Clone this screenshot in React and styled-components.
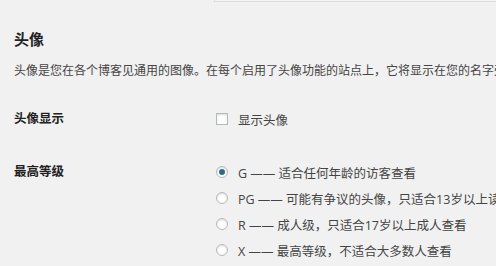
import React from "react";
import styled, { createGlobalStyle } from "styled-components";

const Global = createGlobalStyle`
  html, body { margin: 0; padding: 0; background: #f1f1f1; }
  body {
    font-family: "Open Sans", "Noto Sans CJK SC", sans-serif;
    color: #444;
    overflow: hidden;
  }
`;

const Page = styled.div`
  width: 496px;
  height: 266px;
  overflow: hidden;
  padding-left: 14px;
  box-sizing: border-box;
`;

const FieldTail = styled.div`
  margin-left: 200px;
  height: 1px;
  border: 1px solid #dcdcdc;
  border-top: none;
  border-right: none;
  background: #f4f4f4;
  margin-right: -20px;
`;

const Title = styled.h2`
  margin: 27px 0 0;
  font-size: 15px;
  line-height: 20px;
  font-weight: 700;
  color: #222;
`;

const Desc = styled.p`
  margin: 14px 0 0;
  font-size: 12px;
  line-height: 16px;
  white-space: nowrap;
  color: #444;
`;

const Row = styled.div`
  display: grid;
  grid-template-columns: 202px 1fr;
  margin-top: ${(p) => p.$top}px;
`;

const Label = styled.div`
  font-size: 12.5px;
  font-weight: 700;
  color: #222;
  line-height: 20px;
`;

const Options = styled.div`
  display: flex;
  flex-direction: column;
  gap: 6px;
`;

const Option = styled.div`
  display: flex;
  align-items: center;
  gap: 10px;
  height: 20px;
  font-size: 12.5px;
  color: #444;
  white-space: nowrap;
`;

const Check = styled.span`
  width: 10px;
  height: 10px;
  border: 1px solid #b4b9be;
  background: #fff;
  box-shadow: inset 0 1px 2px rgba(0, 0, 0, 0.15);
  flex: none;
`;

const Radio = styled.span`
  width: 10px;
  height: 10px;
  border-radius: 50%;
  border: 1px solid #b4b9be;
  background: #fff;
  box-shadow: inset 0 1px 2px rgba(0, 0, 0, 0.15);
  flex: none;
  display: flex;
  align-items: center;
  justify-content: center;
  &::after {
    content: "";
    width: 6px;
    height: 6px;
    border-radius: 50%;
    background: ${(p) => (p.$on ? "#2e6a8a" : "transparent")};
  }
`;

const ratings = [
  ["G —— 适合任何年龄的访客查看", true],
  ["PG —— 可能有争议的头像，只适合13岁以上读者查看", false],
  ["R —— 成人级，只适合17岁以上成人查看", false],
  ["X —— 最高等级，不适合大多数人查看", false],
];

export default function App() {
  return (
    <Page>
      <Global />
      <FieldTail />
      <Title>头像</Title>
      <Desc>头像是您在各个博客见通用的图像。在每个启用了头像功能的站点上，它将显示在您的名字旁边。</Desc>
      <Row $top={30}>
        <Label>头像显示</Label>
        <Option>
          <Check />
          显示头像
        </Option>
      </Row>
      <Row $top={33}>
        <Label>最高等级</Label>
        <Options>
          {ratings.map(([t, on]) => (
            <Option key={t}>
              <Radio $on={on} />
              {t}
            </Option>
          ))}
        </Options>
      </Row>
    </Page>
  );
}
